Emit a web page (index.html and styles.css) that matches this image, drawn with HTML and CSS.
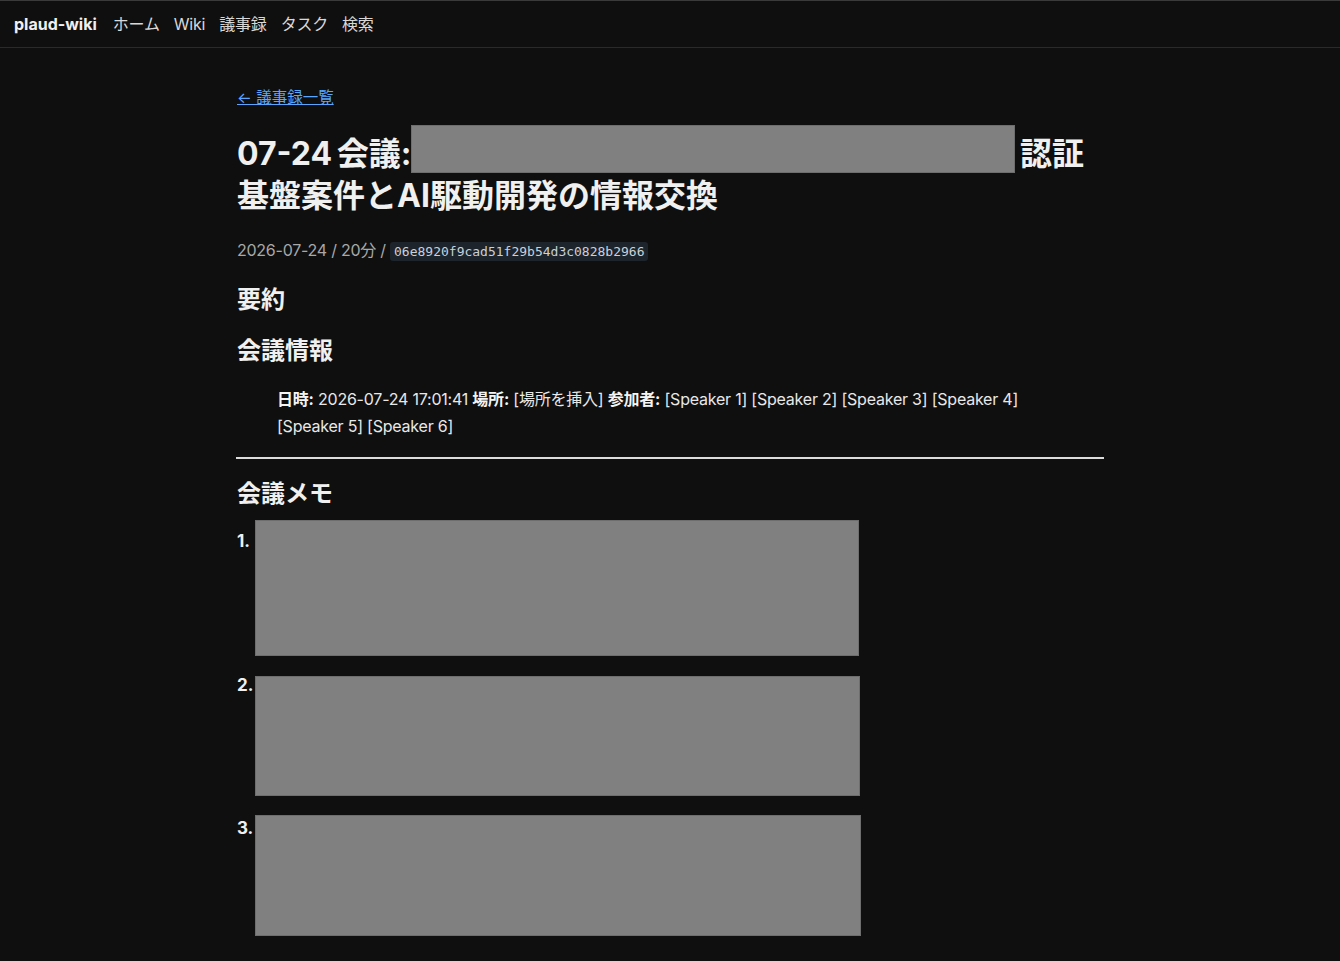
FILE: index.html
```html
<!DOCTYPE html>
<html lang="ja">
<head>
  <meta charset="UTF-8">
  <meta name="viewport" content="width=device-width, initial-scale=1.0">
  <title>07-24 会議 - plaud-wiki</title>
  <link rel="stylesheet" href="styles.css">
</head>
<body>
  <!-- 上部ナビゲーション -->
  <header class="topbar">
    <a href="#" class="brand">plaud-wiki</a>
    <nav class="nav">
      <a href="#">ホーム</a>
      <a href="#">Wiki</a>
      <a href="#">議事録</a>
      <a href="#">タスク</a>
      <a href="#">検索</a>
    </nav>
  </header>

  <main class="page">
    <a href="#" class="back-link">← 議事録一覧</a>

    <h1 class="title">07-24 会議:<span class="redact redact--title"></span> 認証基盤案件とAI駆動開発の情報交換</h1>

    <p class="meta">2026-07-24 / 20分 / <code>06e8920f9cad51f29b54d3c0828b2966</code></p>

    <h2>要約</h2>
    <h2>会議情報</h2>
    <blockquote>
      <p><strong>日時:</strong> 2026-07-24 17:01:41 <strong>場所:</strong> [場所を挿入] <strong>参加者:</strong> [Speaker 1] [Speaker 2] [Speaker 3] [Speaker 4] [Speaker 5] [Speaker 6]</p>
    </blockquote>

    <hr>

    <h2 class="memo-heading">会議メモ</h2>
    <ol class="memo-list">
      <li class="memo-item memo-item--1">
        <span class="num">1.</span>
        <div class="redact redact--1"></div>
      </li>
      <li class="memo-item memo-item--2">
        <span class="num">2.</span>
        <div class="redact redact--2"></div>
      </li>
      <li class="memo-item memo-item--3">
        <span class="num">3.</span>
        <div class="redact redact--3"></div>
      </li>
    </ol>
  </main>
</body>
</html>
```

FILE: styles.css
```css
html, body {
    background-color: #0f0f0f;
}

body {
    margin: 0;
    font-family: Inter, "Noto Sans CJK JP", sans-serif;
    color: #e8e8e8;
    font-size: 16px;
}

a {
    color: inherit;
    text-decoration: none;
}

/* 上部ナビゲーション */
.topbar {
    height: 48px;
    display: flex;
    align-items: center;
    gap: 16px;
    padding: 0 14px;
    border-top: 1px solid #3a3a3a;
    border-bottom: 1px solid #2a2a2a;
    box-sizing: border-box;
}

.brand {
    font-weight: 700;
    font-size: 16px;
    line-height: 24px;
    color: #f0f0f0;
}

.nav {
    display: flex;
    align-items: baseline;
    gap: 14px;
    letter-spacing: -0.2px;
}

.nav a {
    font-size: 16px;
    line-height: 24px;
    color: #d8d8d8;
}

/* 本文 */
.page {
    max-width: 867px;
    margin: 0 auto;
    padding: 39px 0 40px 1px;
}

.back-link {
    display: inline-block;
    font-size: 15.5px;
    line-height: 20px;
    color: #58a6ff;
    text-decoration: underline;
}

.title {
    margin: 17px 0 0;
    font-size: 32px;
    line-height: 42px;
    font-weight: 700;
    word-spacing: -3px;
    color: #f0f0f0;
}

.redact {
    background-color: #808080;
    border: 1px solid #6e6e6e;
    box-sizing: border-box;
}

.redact--title {
    display: inline-block;
    width: 604px;
    height: 48px;
    vertical-align: -8px;
}

.meta {
    margin: 21px 0 0;
    font-size: 16px;
    line-height: 24px;
    color: #a8a8a8;
    letter-spacing: -0.25px;
}

.meta code {
    font-family: "DejaVu Sans Mono", monospace;
    font-size: 13px;
    letter-spacing: 0;
    color: #c9d1d9;
    background-color: #1d242c;
    padding: 2px 4px;
    border-radius: 3px;
}

h2 {
    font-size: 24px;
    line-height: 30px;
    font-weight: 700;
    color: #f0f0f0;
    margin: 21px 0 0;
}

blockquote {
    margin: 20px 40px 0;
}

blockquote p {
    margin: 0;
    line-height: 27px;
    color: #e8e8e8;
    letter-spacing: -0.22px;
}

blockquote strong {
    color: #f4f4f4;
}

hr {
    border: 0;
    border-top: 2px solid #dcdcdc;
    margin: 17px 0 0 -1px;
}

.memo-heading {
    margin-top: 20px;
}

.memo-list {
    list-style: none;
    margin: 11px 0 0;
    padding: 0;
}

.memo-item {
    display: flex;
    align-items: flex-start;
}

.num {
    width: 18px;
    font-weight: 700;
    font-size: 17px;
    line-height: 24px;
    color: #f0f0f0;
}

.memo-item--1 .num {
    margin-top: 9px;
}

.memo-item--2 {
    margin-top: 17px;
}

.memo-item--2 .redact {
    margin-top: 3px;
}

.memo-item--3 {
    margin-top: 19px;
}

.memo-item--3 .num {
    margin-top: 1px;
}

.redact--1 {
    width: 604px;
    height: 136px;
}

.redact--2 {
    width: 605px;
    height: 120px;
}

.redact--3 {
    width: 606px;
    height: 121px;
}
```
